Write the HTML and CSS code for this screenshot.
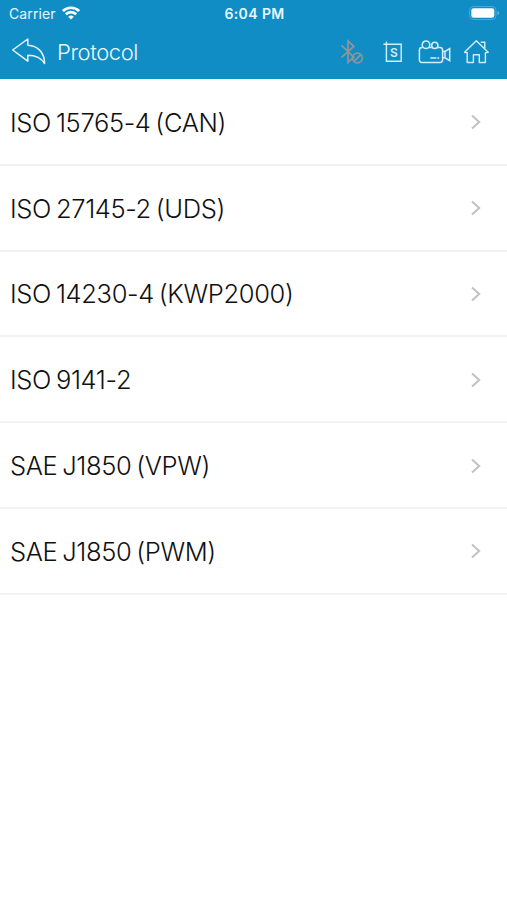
FILE: index.html
```html
<!DOCTYPE html>
<html lang="en">
<head>
  <meta charset="UTF-8" />
  <meta name="viewport" content="width=device-width, initial-scale=1.0" />
  <title>Protocol</title>
  <link rel="stylesheet" href="styles.css">
</head>
<body>
  <header>
    <div class="status-bar">
      <div class="carrier">
        <span>Carrier</span>
        <svg width="18" height="14" viewBox="0 0 18 14" fill="none" stroke="#fff" stroke-width="2.7">
          <path d="M0.9 5.1a11.5 11.5 0 0 1 16.2 0" />
          <path d="M3.8 8.3a7.4 7.4 0 0 1 10.4 0" />
          <path d="M9 13.6L6.2 10.8a4 4 0 0 1 5.6 0z" fill="#fff" stroke="none" />
        </svg>
      </div>
      <span class="time">6:04 PM</span>
      <svg class="battery" width="31" height="14" viewBox="0 0 31 14">
        <rect x="0.5" y="0.5" width="26.5" height="13" rx="3.8" fill="none" stroke="#4aa8d4" />
        <rect x="2.3" y="2.3" width="23" height="9.4" rx="2.2" fill="#fff" />
        <path d="M28.5 5v4q1.6-.6 1.6-2t-1.6-2z" fill="#6fbce0" />
      </svg>
    </div>
    <nav>
      <svg class="back" width="36" height="28" viewBox="0 0 36 28" fill="none" stroke="#e4f6ff" stroke-width="1.5" stroke-linejoin="round">
        <path d="M1.7 12L16.8 1V7.3C26 7.8 33.5 13.5 33.6 25.6C30 19.5 25 17.4 16.8 17.3V23.2z" />
      </svg>
      <h1>Protocol</h1>
      <div class="tools">
        <svg class="bluetooth" width="24" height="26" viewBox="0 0 24 26" fill="none" stroke="#8b959a" stroke-width="1.8">
          <path d="M1.5 6.4L13.8 18L8 23.4V2L13.8 7.4L1.5 18.4" />
          <circle cx="17.4" cy="19" r="4.9" />
          <path d="M14 22.4L20.8 15.6" />
        </svg>
        <svg class="screenshot" width="20" height="24" viewBox="0 0 20 24" fill="none" stroke="#d2eefb" stroke-width="1.4">
          <path d="M0.4 4.2H18.2V21.3H3.4V1.4" />
          <text class="tool-letter" x="10.8" y="16.9" text-anchor="middle">S</text>
        </svg>
        <svg class="camera" width="33" height="24" viewBox="0 0 33 24" fill="none" stroke="#d2eefb" stroke-width="1.5">
          <path d="M4.7 7.5H4Q1.4 7.5 1.4 10.1V19.8Q1.4 22.4 4 22.4H22Q24.6 22.4 24.6 19.8V10.1Q24.6 7.5 22 7.5H20.1M11 7.5H13.6" />
          <circle cx="8" cy="4.8" r="3.8" />
          <circle cx="16.8" cy="5.4" r="3.1" />
          <path d="M24.6 11.4H27L31.7 8.6V20.7L27 17.8H24.6M27 11.4V17.8M12.3 18H18.4M19.4 18H21.2" />
        </svg>
        <svg class="home" width="27" height="26" viewBox="0 0 27 26" fill="none" stroke="#d2eefb" stroke-width="1.4" stroke-linejoin="round">
          <path d="M4.2 13.8L1.6 13.3L13.3 1.8L25.2 13.3L22.4 13.8V23.5H16.3V15.7H10.4V23.5H4.2z" />
          <path d="M17.8 3.2H21.8V9.5" />
        </svg>
      </div>
    </nav>
  </header>
  <main>
    <ul class="protocol-list">
      <li>
        <span>ISO 15765-4 (CAN)</span>
        <svg class="chevron" viewBox="0 0 12 18"><path d="M2 2.5L9.2 9L2 15.5" /></svg>
      </li>
      <li>
        <span>ISO 27145-2 (UDS)</span>
        <svg class="chevron" viewBox="0 0 12 18"><path d="M2 2.5L9.2 9L2 15.5" /></svg>
      </li>
      <li>
        <span>ISO 14230-4 (KWP2000)</span>
        <svg class="chevron" viewBox="0 0 12 18"><path d="M2 2.5L9.2 9L2 15.5" /></svg>
      </li>
      <li>
        <span>ISO 9141-2</span>
        <svg class="chevron" viewBox="0 0 12 18"><path d="M2 2.5L9.2 9L2 15.5" /></svg>
      </li>
      <li>
        <span>SAE J1850 (VPW)</span>
        <svg class="chevron" viewBox="0 0 12 18"><path d="M2 2.5L9.2 9L2 15.5" /></svg>
      </li>
      <li>
        <span>SAE J1850 (PWM)</span>
        <svg class="chevron" viewBox="0 0 12 18"><path d="M2 2.5L9.2 9L2 15.5" /></svg>
      </li>
    </ul>
  </main>
</body>
</html>
```

FILE: styles.css
```css
* {
  box-sizing: border-box;
}
body {
  margin: 0;
  background-color: #fff;
  font-family: Inter, "Liberation Sans", sans-serif;
  color: #111;
}
svg {
  display: block;
  flex-shrink: 0;
}
header {
  height: 79px;
  background-color: #118dc5;
  color: #e9f8ff;
}
.status-bar {
  display: grid;
  grid-template-columns: 1fr auto 1fr;
  align-items: center;
  height: 26px;
  padding: 0 7px 0 9px;
}
.carrier {
  display: flex;
  align-items: center;
  gap: 6px;
  font-size: 14px;
  letter-spacing: 0.1px;
}
.time {
  font-size: 14px;
  font-weight: 600;
  letter-spacing: 0.4px;
}
.battery {
  justify-self: end;
}
nav {
  display: flex;
  align-items: center;
  height: 52px;
  padding: 0 17px 0 11px;
}
h1 {
  margin: 0 0 0 10px;
  font-size: 22px;
  font-weight: 300;
  letter-spacing: -0.4px;
}
.tools {
  display: flex;
  align-items: center;
  margin-left: auto;
}
.bluetooth {
  margin-right: 19px;
}
.screenshot {
  margin-right: 15px;
}
.camera {
  margin-right: 12px;
}
.tool-letter {
  font-size: 12px;
  font-weight: 600;
  fill: #d2eefb;
  stroke: none;
}
.protocol-list {
  margin: 0;
  padding: 1px 0 0;
  list-style: none;
}
.protocol-list li {
  display: flex;
  align-items: center;
  justify-content: space-between;
  height: 85.8px;
  padding: 1px 25px 0 10px;
  border-bottom: 2px solid #f2f2f2;
  font-size: 25.5px;
  font-weight: 300;
  letter-spacing: -0.35px;
  word-spacing: -2px;
}
.chevron {
  width: 12px;
  height: 18px;
  fill: none;
  stroke: #c2c2c4;
  stroke-width: 2;
}
```
